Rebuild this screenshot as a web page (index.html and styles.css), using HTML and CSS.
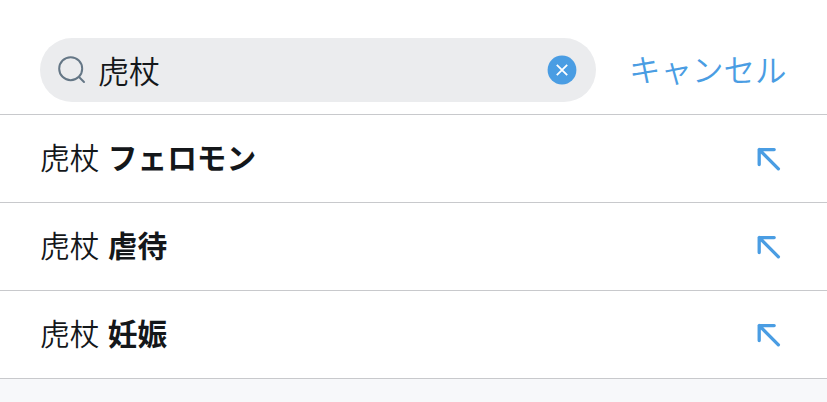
FILE: index.html
```html
<!DOCTYPE html>
<html lang="ja">
<head>
  <meta charset="UTF-8">
  <meta name="viewport" content="width=device-width, initial-scale=1.0">
  <title>検索</title>
  <link rel="stylesheet" href="styles.css">
</head>
<body>
  <header class="search-header">
    <div class="search-box">
      <svg class="search-icon" viewBox="0 0 30 30">
        <circle cx="13.7" cy="13.7" r="11.5"/>
        <path d="M22 22L27 27"/>
      </svg>
      <span class="query">虎杖</span>
      <svg class="clear-icon" viewBox="0 0 30 30">
        <circle cx="15" cy="15" r="14.4"/>
        <path d="M9.8 9.8L20.2 20.2M20.2 9.8L9.8 20.2"/>
      </svg>
    </div>
    <a class="cancel">キャンセル</a>
  </header>
  <ul class="suggestions">
    <li class="suggestion">
      <span class="text">虎杖 <b>フェロモン</b></span>
      <svg class="arrow" viewBox="0 0 24 24"><path d="M2.2 17.5V2.6H17.2M2.2 2.6L21.4 21.8"/></svg>
    </li>
    <li class="suggestion">
      <span class="text">虎杖 <b>虐待</b></span>
      <svg class="arrow" viewBox="0 0 24 24"><path d="M2.2 17.5V2.6H17.2M2.2 2.6L21.4 21.8"/></svg>
    </li>
    <li class="suggestion">
      <span class="text">虎杖 <b>妊娠</b></span>
      <svg class="arrow" viewBox="0 0 24 24"><path d="M2.2 17.5V2.6H17.2M2.2 2.6L21.4 21.8"/></svg>
    </li>
  </ul>
</body>
</html>
```
FILE: styles.css
```css
body {
  margin: 0;
  background: #f7f8fa;
  color: #14171a;
  font-family: "Noto Sans CJK JP", sans-serif;
}
.search-header {
  display: flex;
  align-items: center;
  gap: 33px;
  height: 64px;
  padding: 38px 40px 12px;
  background: #fff;
  border-bottom: 1px solid #c8c9cc;
}
.search-box {
  display: flex;
  align-items: center;
  box-sizing: border-box;
  flex: none;
  width: 556px;
  height: 64px;
  padding: 0 19px 0 17px;
  border-radius: 32px;
  background: #ebecee;
}
.search-icon {
  width: 30px;
  height: 30px;
  fill: none;
  stroke: #657786;
  stroke-width: 2;
  stroke-linecap: round;
}
.query {
  flex: 1;
  margin-left: 11px;
  padding-bottom: 1px;
  font-size: 31px;
  font-weight: 350;
}
.clear-icon {
  width: 30px;
  height: 30px;
  fill: #4a9de3;
}
.clear-icon path {
  stroke: #fff;
  stroke-width: 1.8;
}
.cancel {
  padding-bottom: 5px;
  color: #4a9de3;
  font-size: 31.5px;
  font-weight: 350;
  white-space: nowrap;
}
.suggestions {
  margin: 0;
  padding: 0;
  list-style: none;
}
.suggestion {
  display: flex;
  align-items: center;
  justify-content: space-between;
  height: 87px;
  padding: 0 46px 0 40px;
  background: #fff;
  border-bottom: 1px solid #c8c9cc;
  font-size: 29.7px;
  font-weight: 350;
}
.text {
  padding-bottom: 4px;
  word-spacing: 1.8px;
}
.suggestion b {
  font-weight: 700;
}
.arrow {
  width: 24px;
  height: 24px;
  fill: none;
  stroke: #4a9de3;
  stroke-width: 3.3;
  stroke-linecap: round;
  stroke-linejoin: round;
}
```
